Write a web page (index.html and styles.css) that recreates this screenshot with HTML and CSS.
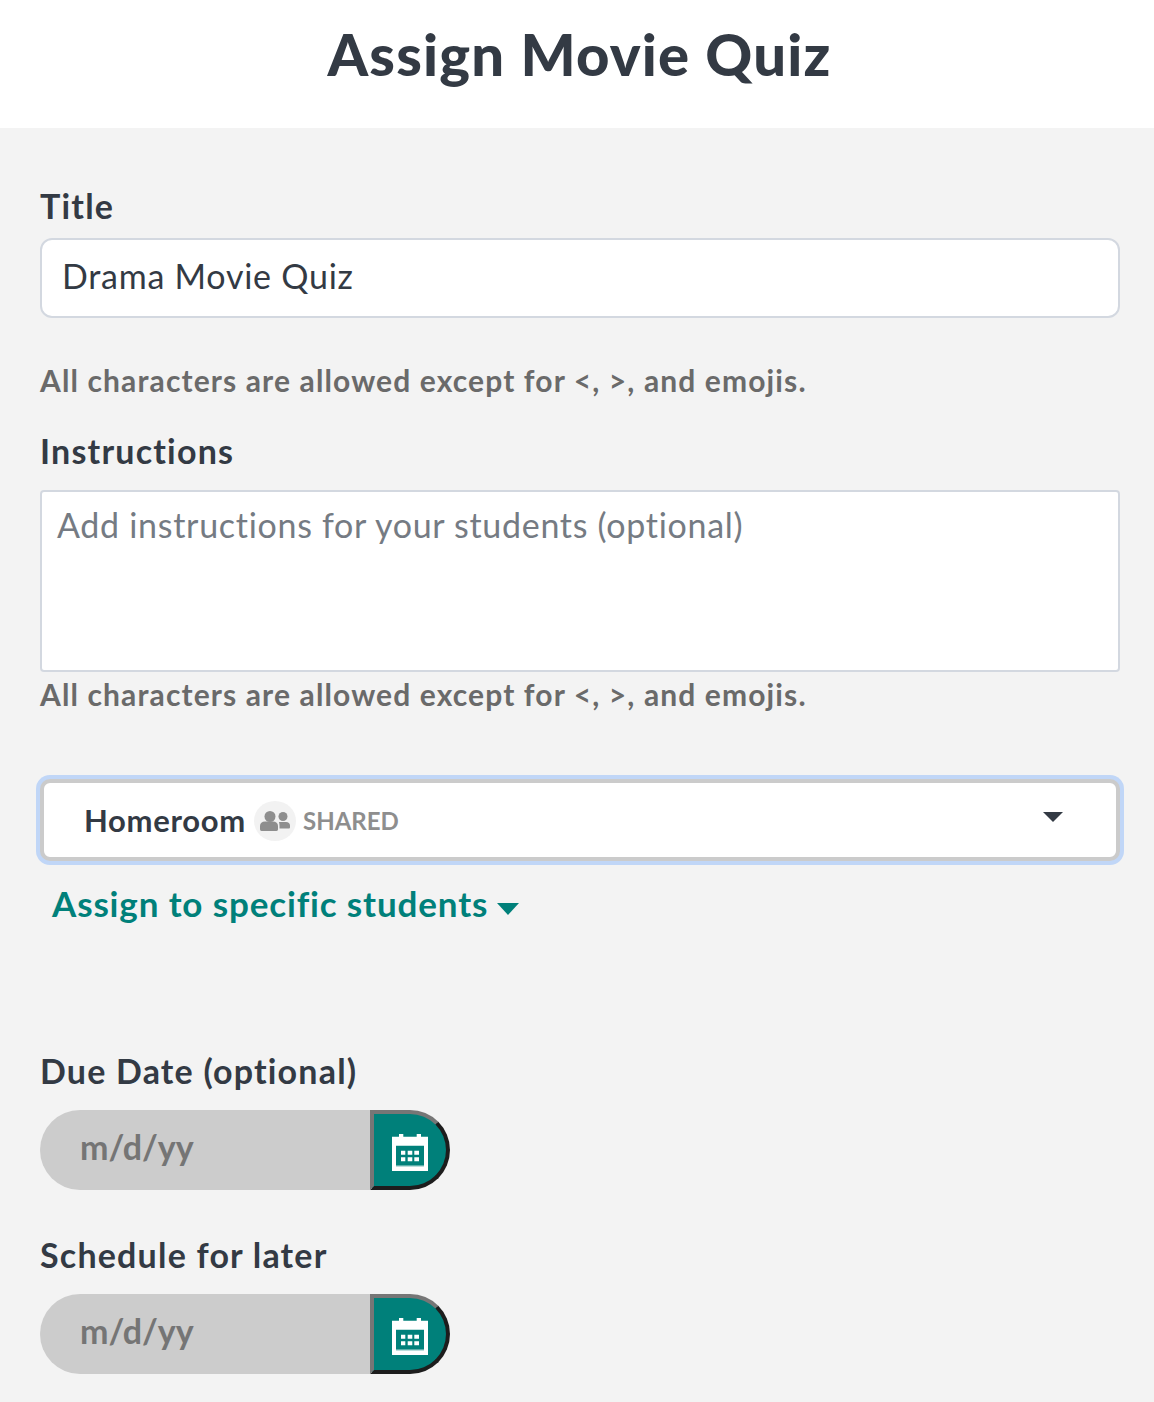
FILE: index.html
```html
<!DOCTYPE html>
<html lang="en">
<head>
    <meta charset="UTF-8">
    <meta name="viewport" content="width=device-width, initial-scale=1.0">
    <title>Assign Movie Quiz</title>
    <link rel="stylesheet" href="styles.css">
</head>
<body>

<!-- Header -->
<header class="page-header">
    <h1>Assign Movie Quiz</h1>
</header>

<main class="assign-form">
    <!-- Title -->
    <label class="field-label title-label" for="quizTitle">Title</label>
    <input class="text-input" type="text" id="quizTitle" value="Drama Movie Quiz">
    <p class="hint hint-title">All characters are allowed except for &lt;, &gt;, and emojis.</p>

    <!-- Instructions -->
    <label class="field-label instructions-label" for="quizInstructions">Instructions</label>
    <textarea class="text-area" id="quizInstructions" placeholder="Add instructions for your students (optional)"></textarea>
    <p class="hint hint-instructions">All characters are allowed except for &lt;, &gt;, and emojis.</p>

    <!-- Class select -->
    <div class="class-select">
        <span class="class-name">Homeroom</span>
        <span class="shared-icon">
            <svg width="30" height="20" viewBox="0 0 30 20"><circle cx="10" cy="5.500" r="5.500" fill="#8e8e8e"/><circle cx="23" cy="5.500" r="4.500" fill="#8e8e8e"/><path d="M0 18v-3c0-3 2-4.500 5-4.500h8c3 0 5 1.500 5 4.500v3c0 1-.5 2-1.500 2h-15C.5 20 0 19 0 18z" fill="#8e8e8e"/><path d="M19 11h7c2.500 0 4 1.500 4 3.500V16c0 1-.5 1.500-1.500 1.500H19.500V15c0-1.500-.2-2.800-.5-4z" fill="#8e8e8e"/></svg>
        </span>
        <span class="shared-text">SHARED</span>
        <span class="select-caret"></span>
    </div>
    <a class="specific-link" href="#">Assign to specific students <span class="link-caret"></span></a>

    <!-- Dates -->
    <label class="field-label due-label" for="dueDate">Due Date (optional)</label>
    <div class="date-row">
        <input class="date-input" type="text" id="dueDate" placeholder="m/d/yy">
        <button class="date-button" type="button" aria-label="Pick due date">
            <svg class="calendar-icon" width="36" height="37" viewBox="0 0 36 37"><path fill-rule="evenodd" fill="#fff" d="M0 2.700h7V0h4.300v2.700h13.400V0H29v2.700h7V37H0zM4 11.700v20h28v-20z"/><path fill="#fff" d="M9 16.700h4.300v4H9zM15.700 16.700h4.600v4h-4.600zM22.300 16.700h4.700v4h-4.700zM9 23.300h4.300v4H9zM15.700 23.300h4.600v4h-4.600zM22.300 23.300h4.700v4h-4.700z"/><path fill="#9fcfcd" d="M4 31.700h28v1H4z"/></svg>
        </button>
    </div>

    <label class="field-label schedule-label" for="scheduleDate">Schedule for later</label>
    <div class="date-row">
        <input class="date-input" type="text" id="scheduleDate" placeholder="m/d/yy">
        <button class="date-button" type="button" aria-label="Pick schedule date">
            <svg class="calendar-icon" width="36" height="37" viewBox="0 0 36 37"><path fill-rule="evenodd" fill="#fff" d="M0 2.700h7V0h4.300v2.700h13.400V0H29v2.700h7V37H0zM4 11.700v20h28v-20z"/><path fill="#fff" d="M9 16.700h4.300v4H9zM15.700 16.700h4.600v4h-4.600zM22.300 16.700h4.700v4h-4.700zM9 23.300h4.300v4H9zM15.700 23.300h4.600v4h-4.600zM22.300 23.300h4.700v4h-4.700z"/><path fill="#9fcfcd" d="M4 31.700h28v1H4z"/></svg>
        </button>
    </div>
</main>

</body>
</html>
```

FILE: styles.css
```css
/* Basic styling */
html, body {
    margin: 0;
    height: 100%;
}

body {
    font-family: Lato, "Open Sans", sans-serif;
    font-variant-ligatures: none;
    color: #333a44;
    background-color: #f3f3f3;
    overflow: hidden;
}

/* Header */
.page-header {
    height: 128px;
    background-color: #ffffff;
    display: flex;
    justify-content: center;
    align-items: center;
    padding-left: 5px;
    box-sizing: border-box;
}

.page-header h1 {
    margin: 0;
    font-size: 58px;
    font-weight: 900;
    letter-spacing: 1.2px;
    line-height: 64px;
    padding-bottom: 20px;
}

/* Form */
.assign-form {
    padding: 0 34px 0 40px;
    display: flex;
    flex-direction: column;
    align-items: flex-start;
}

.field-label {
    display: block;
    font-size: 34px;
    line-height: 40px;
    font-weight: 700;
    letter-spacing: 1.2px;
}

.title-label {
    margin-top: 58px;
    margin-bottom: 12px;
}

.instructions-label {
    margin-top: 33px;
    margin-bottom: 19px;
}

.due-label {
    margin-top: 127px;
    margin-bottom: 19px;
}

.schedule-label {
    margin-top: 45px;
    margin-bottom: 19px;
}

.text-input,
.text-area {
    width: 1080px;
    box-sizing: border-box;
    background-color: #ffffff;
    border: 2px solid #d3d8e0;
    font-family: inherit;
    font-variant-ligatures: none;
    color: inherit;
    outline: none;
}

.text-input {
    height: 80px;
    border-radius: 12px;
    padding: 0 20px 6px;
    font-size: 34px;
    letter-spacing: 0.75px;
}

.text-area {
    display: block;
    height: 182px;
    border-radius: 4px;
    padding: 13px 15px;
    font-size: 34px;
    line-height: 40px;
    letter-spacing: 0.7px;
    resize: none;
}

.text-area::placeholder {
    color: #757b83;
    opacity: 1;
}

.hint {
    margin: 0;
    font-size: 30px;
    line-height: 36px;
    font-weight: 700;
    letter-spacing: 1.12px;
    color: #6a6a6a;
}

.hint-title {
    margin-top: 44px;
}

.hint-instructions {
    margin-top: 4px;
}

/* Class select */
.class-select {
    width: 1080px;
    height: 82px;
    box-sizing: border-box;
    margin-top: 67px;
    padding-left: 40px;
    display: flex;
    align-items: center;
    background-color: #ffffff;
    border: 4px solid #cbcbcb;
    border-radius: 10px;
    box-shadow: 0 0 0 4px #c0d6f7;
    position: relative;
}

.class-name {
    font-size: 31px;
    font-weight: 700;
    letter-spacing: 0.7px;
}

.shared-icon {
    width: 42px;
    height: 40px;
    margin: 2px 7px 0 8px;
    display: flex;
    justify-content: center;
    align-items: center;
    border-radius: 50%;
    background-color: #f2f2f2;
}

.shared-text {
    font-size: 24px;
    font-weight: 700;
    color: #8e8e8e;
}

.select-caret {
    position: absolute;
    right: 53px;
    top: 29px;
    border-left: 10px solid transparent;
    border-right: 10px solid transparent;
    border-top: 10px solid #333a44;
}

.specific-link {
    margin: 21px 0 0 12px;
    font-size: 35px;
    line-height: 42px;
    font-weight: 700;
    letter-spacing: 0.85px;
    color: #00807a;
    text-decoration: none;
    display: flex;
    align-items: center;
    gap: 9px;
}

.link-caret {
    margin-top: 11px;
    border-left: 11px solid transparent;
    border-right: 11px solid transparent;
    border-top: 12px solid #00807a;
}

/* Date fields */
.date-row {
    display: flex;
    height: 80px;
}

.date-input {
    width: 330px;
    box-sizing: border-box;
    padding: 0 0 8px 40px;
    border: none;
    border-radius: 40px 0 0 40px;
    background-color: #cccccc;
    font-family: inherit;
    font-size: 34px;
    font-weight: 700;
    outline: none;
}

.date-input::placeholder {
    color: #757575;
    opacity: 1;
}

.date-button {
    width: 80px;
    box-sizing: border-box;
    padding: 0;
    display: flex;
    justify-content: center;
    align-items: center;
    background-color: #00807a;
    border-style: solid;
    border-width: 4px;
    border-color: #767676 #1d1d1d #1d1d1d #767676;
    border-radius: 0 40px 40px 0;
}

.calendar-icon {
    margin-top: 5px;
}
```
